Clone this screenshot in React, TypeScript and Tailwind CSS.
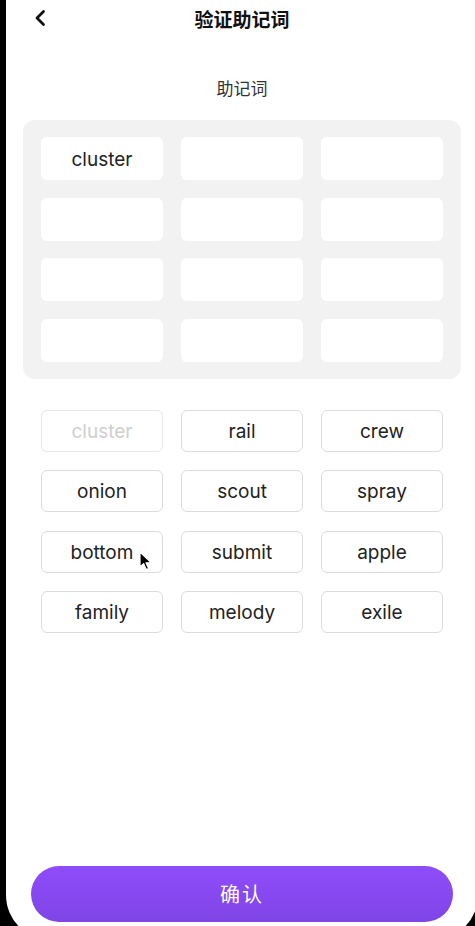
import React from "react";

const selected = ["cluster", "", "", "", "", "", "", "", "", "", "", ""];

const words = [
  "cluster", "rail", "crew",
  "onion", "scout", "spray",
  "bottom", "submit", "apple",
  "family", "melody", "exile",
];

const used = ["cluster"];

export default function App() {
  return (
    <div className="relative w-[475px] h-[926px] overflow-hidden bg-black">
      <div
        className="ml-[6px] w-[472px] h-[940px] bg-white rounded-b-[45px] flex flex-col"
        style={{ fontFamily: '"Noto Sans CJK SC", sans-serif' }}
      >
        {/* Header */}
        <div className="relative h-[37px] flex items-center justify-center">
          <button className="absolute left-[24px] top-[8px] w-[20px] h-[20px] flex items-center justify-center">
            <svg width="14" height="18" viewBox="0 0 14 18" fill="none">
              <path d="M10.5 2.5 L4 9 L10.5 15.5" stroke="#111" strokeWidth="2.8" strokeLinecap="round" strokeLinejoin="round" />
            </svg>
          </button>
          <h1 className="text-[19px] font-bold text-[#111] leading-none">验证助记词</h1>
        </div>

        <p className="mt-[42px] text-center text-[17px] text-[#333] leading-none">助记词</p>

        {/* Selected slots */}
        <div className="mx-[17px] mt-[24px] rounded-[12px] bg-[#f2f2f2] p-[17px] px-[18px] grid grid-cols-3 gap-x-[18px] gap-y-[17.5px]">
          {selected.map((w, i) => (
            <div
              key={i}
              className="h-[43px] pt-[3px] rounded-[6px] bg-white flex items-center justify-center text-[19px] text-[#222]"
              style={{ fontFamily: "Inter, sans-serif" }}
            >
              {w}
            </div>
          ))}
        </div>

        {/* Word options */}
        <div className="mx-[35px] mt-[31px] grid grid-cols-3 gap-x-[18px] gap-y-[18.5px]">
          {words.map((w) => {
            const isUsed = used.includes(w);
            return (
              <button
                key={w}
                className={`h-[42px] pt-[3px] rounded-[6px] border flex items-center justify-center text-[19px] bg-white ${
                  isUsed ? "border-[#e6e6e6] text-[#cfcfcf]" : "border-[#dcdcdc] text-[#222]"
                }`}
                style={{ fontFamily: "Inter, sans-serif" }}
              >
                {w}
              </button>
            );
          })}
        </div>

        <div className="flex-1" />

        <button className="mx-[25px] mb-[18px] h-[56px] rounded-full bg-gradient-to-b from-[#8f4cfa] to-[#7f45e6] text-white text-[20px] tracking-[2px]">
          确认
        </button>
      </div>

      {/* mouse pointer */}
      <svg className="absolute left-[139px] top-[551px]" width="14" height="21" viewBox="0 0 14 21">
        <path d="M1 1 L1 16 L4.6 12.6 L7.2 18.6 L9.6 17.6 L7 11.8 L12 11.6 Z" fill="#000" stroke="#fff" strokeWidth="1.2" strokeLinejoin="round" />
      </svg>
    </div>
  );
}
